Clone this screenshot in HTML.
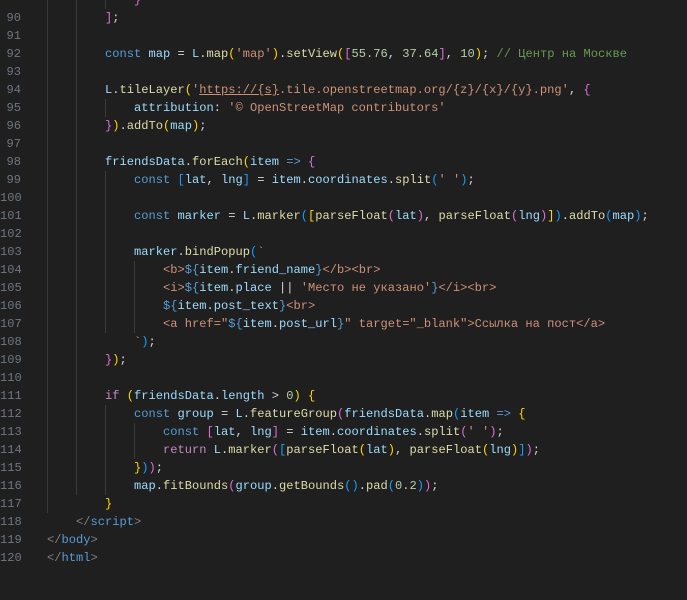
<!DOCTYPE html>
<html><head><meta charset="utf-8"><style>
body{margin:0;background:#1f1f1f;width:687px;height:600px;overflow:hidden;position:relative;font-family:"Liberation Mono","DejaVu Sans Mono",monospace;font-size:12.08px;}
.ln{position:absolute;left:0;width:21px;text-align:right;color:#6e7681;}
.c{position:absolute;left:47px;white-space:pre;color:#d4d4d4;}
.row{position:absolute;left:0;height:18px;line-height:18px;width:687px;}
.g{position:absolute;width:1px;background:#3a3a3a;}
.k{color:#569cd6}.r{color:#c586c0}.v{color:#9cdcfe}.f{color:#dcdcaa}.s{color:#ce9178}.n{color:#b5cea8}.m{color:#6a9955}.y{color:#ffd700}.p{color:#da70d6}.b{color:#179fff}.t{color:#808080}.u{text-decoration:underline}
</style></head><body>
<div class="g" style="left:47px;top:0;height:513px"></div>
<div class="g" style="left:76px;top:0;height:495px"></div>
<div class="g" style="left:105px;top:0;height:9px"></div>
<div class="g" style="left:105px;top:99px;height:18px"></div>
<div class="g" style="left:105px;top:171px;height:162px"></div>
<div class="g" style="left:134px;top:261px;height:72px"></div>
<div class="g" style="left:105px;top:405px;height:90px"></div>
<div class="g" style="left:134px;top:423px;height:36px"></div>
<div class="row" style="top:-9px"><span class="ln"></span><span class="c">            <span class="p">}</span></span></div>
<div class="row" style="top:9px"><span class="ln">90</span><span class="c">        <span class="p">]</span>;</span></div>
<div class="row" style="top:27px"><span class="ln">91</span><span class="c"></span></div>
<div class="row" style="top:45px"><span class="ln">92</span><span class="c">        <span class="k">const</span> <span class="v">map</span> = <span class="v">L</span>.<span class="f">map</span><span class="y">(</span><span class="s">'map'</span><span class="y">)</span>.<span class="f">setView</span><span class="y">(</span><span class="p">[</span><span class="n">55.76</span>, <span class="n">37.64</span><span class="p">]</span>, <span class="n">10</span><span class="y">)</span>; <span class="m">// Центр на Москве</span></span></div>
<div class="row" style="top:63px"><span class="ln">93</span><span class="c"></span></div>
<div class="row" style="top:81px"><span class="ln">94</span><span class="c">        <span class="v">L</span>.<span class="f">tileLayer</span><span class="y">(</span><span class="s">'<span class="u">https://{s}</span>.tile.openstreetmap.org/{z}/{x}/{y}.png'</span>, <span class="p">{</span></span></div>
<div class="row" style="top:99px"><span class="ln">95</span><span class="c">            <span class="v">attribution</span>: <span class="s">'© OpenStreetMap contributors'</span></span></div>
<div class="row" style="top:117px"><span class="ln">96</span><span class="c">        <span class="p">}</span><span class="y">)</span>.<span class="f">addTo</span><span class="y">(</span><span class="v">map</span><span class="y">)</span>;</span></div>
<div class="row" style="top:135px"><span class="ln">97</span><span class="c"></span></div>
<div class="row" style="top:153px"><span class="ln">98</span><span class="c">        <span class="v">friendsData</span>.<span class="f">forEach</span><span class="y">(</span><span class="v">item</span> <span class="k">=&gt;</span> <span class="p">{</span></span></div>
<div class="row" style="top:171px"><span class="ln">99</span><span class="c">            <span class="k">const</span> <span class="b">[</span><span class="v">lat</span>, <span class="v">lng</span><span class="b">]</span> = <span class="v">item</span>.<span class="v">coordinates</span>.<span class="f">split</span><span class="b">(</span><span class="s">' '</span><span class="b">)</span>;</span></div>
<div class="row" style="top:189px"><span class="ln">100</span><span class="c"></span></div>
<div class="row" style="top:207px"><span class="ln">101</span><span class="c">            <span class="k">const</span> <span class="v">marker</span> = <span class="v">L</span>.<span class="f">marker</span><span class="b">(</span><span class="y">[</span><span class="f">parseFloat</span><span class="p">(</span><span class="v">lat</span><span class="p">)</span>, <span class="f">parseFloat</span><span class="p">(</span><span class="v">lng</span><span class="p">)</span><span class="y">]</span><span class="b">)</span>.<span class="f">addTo</span><span class="b">(</span><span class="v">map</span><span class="b">)</span>;</span></div>
<div class="row" style="top:225px"><span class="ln">102</span><span class="c"></span></div>
<div class="row" style="top:243px"><span class="ln">103</span><span class="c">            <span class="v">marker</span>.<span class="f">bindPopup</span><span class="b">(</span><span class="s">`</span></span></div>
<div class="row" style="top:261px"><span class="ln">104</span><span class="c"><span class="s">                &lt;b&gt;</span><span class="k">${</span><span class="v">item</span>.<span class="v">friend_name</span><span class="k">}</span><span class="s">&lt;/b&gt;&lt;br&gt;</span></span></div>
<div class="row" style="top:279px"><span class="ln">105</span><span class="c"><span class="s">                &lt;i&gt;</span><span class="k">${</span><span class="v">item</span>.<span class="v">place</span> || <span class="s">'Место не указано'</span><span class="k">}</span><span class="s">&lt;/i&gt;&lt;br&gt;</span></span></div>
<div class="row" style="top:297px"><span class="ln">106</span><span class="c"><span class="s">                </span><span class="k">${</span><span class="v">item</span>.<span class="v">post_text</span><span class="k">}</span><span class="s">&lt;br&gt;</span></span></div>
<div class="row" style="top:315px"><span class="ln">107</span><span class="c"><span class="s">                &lt;a href="</span><span class="k">${</span><span class="v">item</span>.<span class="v">post_url</span><span class="k">}</span><span class="s">" target="_blank"&gt;Ссылка на пост&lt;/a&gt;</span></span></div>
<div class="row" style="top:333px"><span class="ln">108</span><span class="c"><span class="s">            `</span><span class="b">)</span>;</span></div>
<div class="row" style="top:351px"><span class="ln">109</span><span class="c">        <span class="p">}</span><span class="y">)</span>;</span></div>
<div class="row" style="top:369px"><span class="ln">110</span><span class="c"></span></div>
<div class="row" style="top:387px"><span class="ln">111</span><span class="c">        <span class="r">if</span> <span class="y">(</span><span class="v">friendsData</span>.<span class="v">length</span> &gt; <span class="n">0</span><span class="y">)</span> <span class="y">{</span></span></div>
<div class="row" style="top:405px"><span class="ln">112</span><span class="c">            <span class="k">const</span> <span class="v">group</span> = <span class="v">L</span>.<span class="f">featureGroup</span><span class="p">(</span><span class="v">friendsData</span>.<span class="f">map</span><span class="b">(</span><span class="v">item</span> <span class="k">=&gt;</span> <span class="y">{</span></span></div>
<div class="row" style="top:423px"><span class="ln">113</span><span class="c">                <span class="k">const</span> <span class="p">[</span><span class="v">lat</span>, <span class="v">lng</span><span class="p">]</span> = <span class="v">item</span>.<span class="v">coordinates</span>.<span class="f">split</span><span class="p">(</span><span class="s">' '</span><span class="p">)</span>;</span></div>
<div class="row" style="top:441px"><span class="ln">114</span><span class="c">                <span class="r">return</span> <span class="v">L</span>.<span class="f">marker</span><span class="p">(</span><span class="b">[</span><span class="f">parseFloat</span><span class="y">(</span><span class="v">lat</span><span class="y">)</span>, <span class="f">parseFloat</span><span class="y">(</span><span class="v">lng</span><span class="y">)</span><span class="b">]</span><span class="p">)</span>;</span></div>
<div class="row" style="top:459px"><span class="ln">115</span><span class="c">            <span class="y">}</span><span class="b">)</span><span class="p">)</span>;</span></div>
<div class="row" style="top:477px"><span class="ln">116</span><span class="c">            <span class="v">map</span>.<span class="f">fitBounds</span><span class="p">(</span><span class="v">group</span>.<span class="f">getBounds</span><span class="b">()</span>.<span class="f">pad</span><span class="b">(</span><span class="n">0.2</span><span class="b">)</span><span class="p">)</span>;</span></div>
<div class="row" style="top:495px"><span class="ln">117</span><span class="c">        <span class="y">}</span></span></div>
<div class="row" style="top:513px"><span class="ln">118</span><span class="c">    <span class="t">&lt;/</span><span class="k">script</span><span class="t">&gt;</span></span></div>
<div class="row" style="top:531px"><span class="ln">119</span><span class="c"><span class="t">&lt;/</span><span class="k">body</span><span class="t">&gt;</span></span></div>
<div class="row" style="top:549px"><span class="ln">120</span><span class="c"><span class="t">&lt;/</span><span class="k">html</span><span class="t">&gt;</span></span></div>
</body></html>
